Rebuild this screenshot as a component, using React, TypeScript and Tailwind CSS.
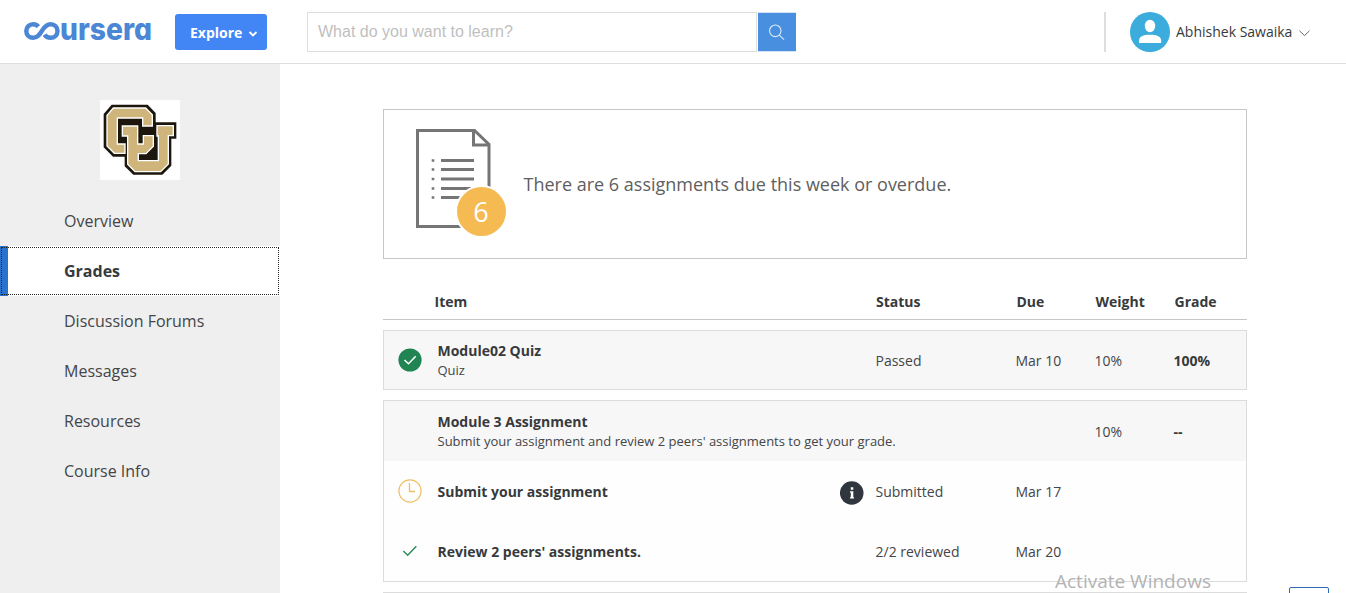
import type { ReactNode } from "react";

function CourseraLogo() {
  return (
    <svg width="136" height="48" viewBox="0 -15 136 48" className="block" role="img" aria-label="coursera">
      <path
        d="M14.3 5.6 C13 4 11.2 3.2 9.2 3.2 C5.3 3.2 2.3 6.3 2.3 10 C2.3 13.8 5.3 16.8 9.2 16.8 C13.6 16.8 15.6 13.6 17.9 9.8 C20.2 6 22.4 3.2 26.6 3.2 C30.5 3.2 33.5 6.2 33.5 10 C33.5 13.8 30.5 16.8 26.6 16.8 C24 16.8 21.8 15.6 20.6 13.6"
        fill="none"
        stroke="#4c87d6"
        strokeWidth="4.5"
      />
      <text
        x="36"
        y="19"
        textLength="92"
        lengthAdjust="spacingAndGlyphs"
        fill="#4c87d6"
        className="font-['Inter',sans-serif] text-[30px] font-extrabold [font-feature-settings:'cv11']"
      >
        ursera
      </text>
    </svg>
  );
}

function UniversityLogo() {
  return (
    <svg width="80" height="80" viewBox="30 30 240 240" className="block bg-white" role="img" aria-label="CU">
      <path
        d="M41 72 L65 44 H173 L197 69 V97 H259 V146 H244 V227 L217 254 H130 L104 229 V200 H69 L41 172 Z"
        fill="#1d160c"
      />
      <path
        d="M51 76 L70 54 H167 L187 74 V108 H158 V84 H82 V162 H105 V190 H73 L51 168 Z"
        fill="#cfb57c"
        stroke="#fff"
        strokeWidth="4"
      />
      <path
        d="M97 108 H143 V162 H160 V137 H190 V169 L168 191 H145 V212 H205 V138 H201 V107 H250 V137 H235 V222 L212 245 H135 L113 223 V138 H97 Z"
        fill="#cfb57c"
        stroke="#fff"
        strokeWidth="4"
      />
    </svg>
  );
}

function Header() {
  return (
    <header className="flex h-16 shrink-0 items-start border-b border-[#dedede] bg-white pl-6">
      <div className="mt-1.5 w-[151px]">
        <CourseraLogo />
      </div>
      <button className="mt-3.5 flex h-9 w-[92px] items-center rounded-[3px] bg-[#4285f4] pt-0.5 pl-[15px] text-sm font-bold text-white">
        Explore
        <svg width="10" height="8" viewBox="0 0 10 8" className="mt-0.5 ml-1.5">
          <path d="M1.5 2 L5 5.5 L8.5 2" fill="none" stroke="#fff" strokeWidth="1.9" />
        </svg>
      </button>
      <div className="mt-3 ml-10 flex h-10 w-[490px]">
        <div className="flex w-[450px] items-center border border-[#dedede] pl-2.5 font-['Liberation_Sans',Arial,sans-serif] text-base text-[#bfbfbf]">
          What do you want to learn?
        </div>
        <button className="ml-px flex w-[38px] items-center justify-center border-y border-[#d3e3f6] bg-[#488fe0] pr-0.5">
          <svg width="17" height="17" viewBox="0 0 18 18" fill="none" stroke="#d8e8fa" strokeWidth="1.2">
            <circle cx="7.7" cy="7.2" r="6.1" />
            <path d="M12 11.7 L17 16.6" />
          </svg>
        </button>
      </div>
      <div className="mt-3 mr-9 ml-auto flex h-10 items-center">
        <div className="mr-6 h-10 w-0.5 bg-[#dedede]" />
        <svg width="40" height="40" viewBox="0 0 40 40" className="block">
          <circle cx="20" cy="20" r="20" fill="#3bacdb" />
          <ellipse cx="20" cy="14" rx="5.2" ry="6.2" fill="#fff" />
          <path d="M9 31 V29 C9 24.5 13 22.8 20 22.8 C27 22.8 31.2 24.5 31.2 29 V31 Z" fill="#fff" />
        </svg>
        <span className="ml-1.5 w-[117px] text-sm whitespace-nowrap text-[#373a3c]">Abhishek Sawaika</span>
        <svg width="11" height="7" viewBox="0 0 11 7" className="mt-0.5 ml-1.5">
          <path d="M0.5 0.8 L5.5 5.6 L10.5 0.8" fill="none" stroke="#666" strokeWidth="1" />
        </svg>
      </div>
    </header>
  );
}

const navItems = ["Overview", "Grades", "Discussion Forums", "Messages", "Resources", "Course Info"];

function Sidebar() {
  return (
    <aside className="w-[280px] shrink-0 bg-[#efefef] pt-9">
      <div className="ml-[100px] h-24">
        <UniversityLogo />
      </div>
      <nav>
        {navItems.map((item) =>
          item === "Grades" ? (
            <div key={item} className="relative flex h-[50px] items-center border-l-8 border-[#2a73cc] bg-white pl-14 text-base font-bold text-[#373a3c]">
              {item}
              <div className="absolute top-px right-px bottom-px -left-[7px] border border-dotted border-[#222]" />
            </div>
          ) : (
            <div key={item} className="flex h-[50px] items-center pl-16 text-base text-[#434547]">
              {item}
            </div>
          ),
        )}
      </nav>
    </aside>
  );
}

function DueBanner() {
  return (
    <section className="flex h-[150px] items-start border border-[#c7c7c7] pl-8">
      <svg width="91" height="110" viewBox="0 0 91 110" className="mt-[18px] block">
        <path d="M73 60 V16.5 L58.5 2.5 H1.5 V98.5 H46" fill="none" stroke="#757575" strokeWidth="3" />
        <path d="M57.5 2 V17 H73" fill="none" stroke="#757575" strokeWidth="3" />
        <g stroke="#757575" strokeWidth="3">
          <path d="M25 32.5 H58 M25 41.5 H58 M25 51 H58 M25 60.5 H58 M25 69.5 H58" />
          <path d="M15.7 32.5 H18.3 M15.7 41.5 H18.3 M15.7 51 H18.3 M15.7 60.5 H18.3 M15.7 69.5 H18.3" strokeWidth="2.6" />
        </g>
        <circle cx="65.5" cy="83.5" r="26.5" fill="#fff" />
        <circle cx="65.5" cy="83.5" r="24.5" fill="#f5ba52" />
        <text x="65" y="93.5" textAnchor="middle" fill="#fff" className="text-[27px]">
          6
        </text>
      </svg>
      <p className="mt-[60px] ml-[16.5px] text-lg leading-7 text-[#5e5e5e]">There are 6 assignments due this week or overdue.</p>
    </section>
  );
}

interface RowProps {
  icon?: ReactNode;
  title: string;
  note?: string;
  info?: boolean;
  status?: string;
  due?: string;
  weight?: string;
  grade?: string;
}

function Row({ icon, title, note, info, status, due, weight, grade }: RowProps) {
  return (
    <div className="grid h-full grid-cols-[53.5px_402px_36px_140px_79px_79px_1fr] items-center text-sm text-[#434547]">
      <div className="pl-[14px]">{icon}</div>
      <div className={note ? "-mt-px whitespace-nowrap" : "whitespace-nowrap"}>
        <div className="leading-5 font-bold text-[#373a3c]">{title}</div>
        {note && <div className="text-[13px] leading-[18px]">{note}</div>}
      </div>
      <div>{info && <InfoIcon />}</div>
      <div>{status}</div>
      <div>{due}</div>
      <div>{weight}</div>
      <div className="font-bold text-[#373a3c]">{grade}</div>
    </div>
  );
}

function InfoIcon() {
  return (
    <svg width="24" height="24" viewBox="0 0 24 24" className="mt-0.5 block">
      <circle cx="11.7" cy="12" r="11.8" fill="#30363d" />
      <path d="M10.8 6.3 H13.3 V8.8 H10.8 Z M10.8 10.3 H13.3 V17.5 H10.8 Z M10 10.3 H11 V11.5 H10 Z M10 16.3 H14 V17.5 H10 Z" fill="#fff" />
    </svg>
  );
}

function PassedIcon() {
  return (
    <svg width="24" height="24" viewBox="0 0 24 24" className="-mt-0.5 block">
      <circle cx="12" cy="12" r="11.6" fill="#208552" />
      <path d="M6.5 12 L10.5 15.7 L17.7 8.2" fill="none" stroke="#fff" strokeWidth="1.5" />
    </svg>
  );
}

function ClockIcon() {
  return (
    <svg width="24" height="24" viewBox="0 0 24 24" className="-mt-0.5 block">
      <circle cx="12" cy="12" r="11.1" fill="none" stroke="#eec066" strokeWidth="1.2" />
      <path d="M11.5 4 V12.5 H17" fill="none" stroke="#eec066" strokeWidth="1.3" />
    </svg>
  );
}

function CheckIcon() {
  return (
    <svg width="24" height="24" viewBox="0 0 24 24" className="-mt-0.5 block">
      <path d="M5.3 12 L9.7 16.2 L18.3 7.2" fill="none" stroke="#2f8a5e" strokeWidth="1.5" />
    </svg>
  );
}

function GradesTable() {
  return (
    <section>
      <div className="mt-[25px] grid h-9 grid-cols-[51.5px_441.5px_140.5px_79px_79px_1fr] items-center border-b border-[#c7c7c7] text-sm font-bold text-[#373a3c]">
        <div />
        <div>Item</div>
        <div>Status</div>
        <div>Due</div>
        <div>Weight</div>
        <div>Grade</div>
      </div>
      <div className="mt-2.5 h-[60px] border border-[#dcdcdc] bg-[#f7f7f7] pt-px">
        <Row icon={<PassedIcon />} title="Module02 Quiz" note="Quiz" status="Passed" due="Mar 10" weight="10%" grade="100%" />
      </div>
      <div className="mt-2.5 border border-[#dcdcdc] bg-[#fefefe]">
        <div className="h-[60px] bg-[#f7f7f7] pt-px">
          <Row
            title="Module 3 Assignment"
            note="Submit your assignment and review 2 peers' assignments to get your grade."
            weight="10%"
            grade="--"
          />
        </div>
        <div className="h-[60px] pt-px">
          <Row icon={<ClockIcon />} title="Submit your assignment" info status="Submitted" due="Mar 17" />
        </div>
        <div className="h-[60px] pt-px">
          <Row icon={<CheckIcon />} title="Review 2 peers' assignments." status="2/2 reviewed" due="Mar 20" />
        </div>
      </div>
      <div className="mt-2.5 h-[60px] border border-[#dcdcdc] bg-[#f7f7f7]" />
    </section>
  );
}

export default function App() {
  return (
    <div className="relative flex h-[593px] w-[1346px] flex-col overflow-hidden bg-white font-['Open_Sans','Noto_Sans',sans-serif]">
      <Header />
      <div className="flex min-h-0 flex-1">
        <Sidebar />
        <main className="ml-[103px] w-[864px] pt-[45px]">
          <DueBanner />
          <GradesTable />
        </main>
      </div>
      <div className="absolute top-[567px] left-[1055px] text-[19px] leading-7 whitespace-nowrap text-[#b3b3b3]">Activate Windows</div>
      <div className="absolute top-[587px] left-[1289px] h-10 w-10 rounded-[2px] border border-[#2a6ab5] bg-white" />
    </div>
  );
}
